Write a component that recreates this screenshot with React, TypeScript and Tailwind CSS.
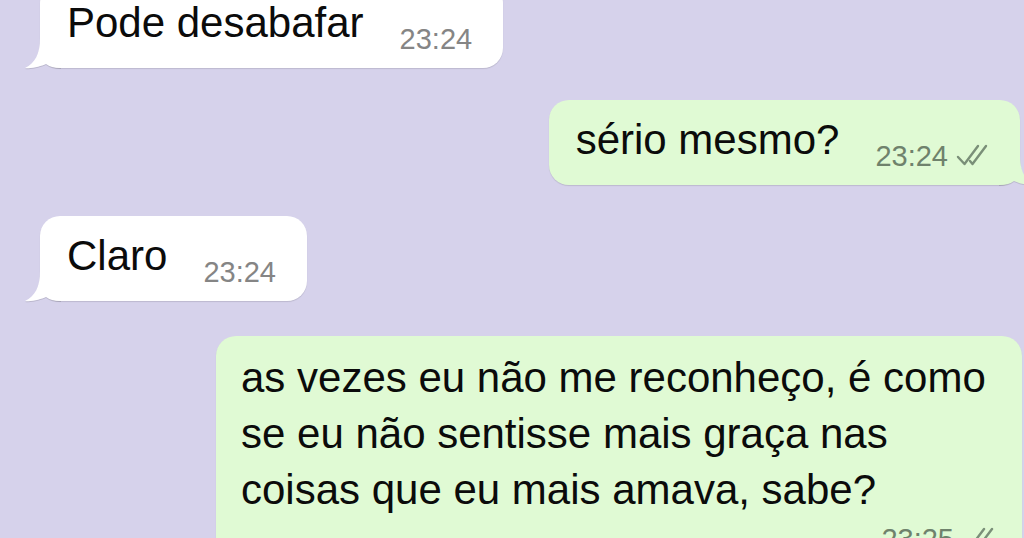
const font = { fontFamily: '"Liberation Sans", Arial, sans-serif' };

function Checks() {
  return (
    <svg width="34" height="24" viewBox="0 0 34 24" className="ml-[8px] mb-[1px]" fill="none">
      <path d="M2 14 L8.5 21 L22 3" stroke="#7a8f78" strokeWidth="2.4" strokeLinecap="round" strokeLinejoin="round" />
      <path d="M14 18 L16.5 21 L30 3" stroke="#7a8f78" strokeWidth="2.4" strokeLinecap="round" strokeLinejoin="round" />
    </svg>
  );
}

function TailLeft() {
  return (
    <svg
      width="36"
      height="31"
      viewBox="0 0 36 31"
      className="absolute left-[-15px] bottom-[-1px] drop-shadow-[0_1px_0.5px_rgba(0,0,0,0.12)]"
    >
      <path d="M15 0 C15 16 10 25 0 30 C8 31 16 28 21 26 C25 29 30 30 36 30 L36 0 Z" fill="#ffffff" />
    </svg>
  );
}

function TailRight() {
  return (
    <svg
      width="36"
      height="31"
      viewBox="0 0 36 31"
      className="absolute right-[-15px] bottom-[-1px] drop-shadow-[0_1px_0.5px_rgba(0,0,0,0.12)]"
    >
      <path d="M21 0 C21 16 26 25 36 30 C28 31 20 28 15 26 C11 29 6 30 0 30 L0 0 Z" fill="#e0fad4" />
    </svg>
  );
}

function Incoming({ text, time, className }: { text: string; time: string; className?: string }) {
  return (
    <div
      className={
        "relative self-start ml-[40px] flex items-end bg-white rounded-[20px] pl-[27px] pr-[31px] pt-[12px] pb-[17px] shadow-[0_1px_1px_rgba(0,0,0,0.12)] " +
        (className ?? "")
      }
    >
      <TailLeft />
      <span className="relative text-[42px] leading-[56px] text-[#0b0b0b]">{text}</span>
      <span className="relative ml-[36px] text-[29px] leading-[24px] text-[#858585]">{time}</span>
    </div>
  );
}

export default function App() {
  return (
    <div style={font} className="w-[1024px] h-[538px] overflow-hidden bg-[#d6d2eb] flex flex-col">
      <Incoming text="Pode desabafar" time="23:24" className="mt-[-17px]" />

      <div className="relative self-end mr-[4px] mt-[32px] flex items-end bg-[#e0fad4] rounded-[20px] pl-[27px] pr-[30px] pt-[12px] pb-[17px] shadow-[0_1px_1px_rgba(0,0,0,0.12)]">
        <TailRight />
        <span className="relative text-[42px] leading-[56px] text-[#0b0b0b]">sério mesmo?</span>
        <span className="relative ml-[36px] text-[29px] leading-[24px] text-[#6f826c]">23:24</span>
        <Checks />
      </div>

      <Incoming text="Claro" time="23:24" className="mt-[31px]" />

      <div className="self-end mr-[2px] mt-[35px] w-[806px] shrink-0 flex flex-col bg-[#e0fad4] rounded-t-[20px] pl-[25px] pr-[26px] pt-[14px] pb-[20px] shadow-[0_1px_1px_rgba(0,0,0,0.12)]">
        <p className="text-[42px] leading-[56px] text-[#0b0b0b]">
          as vezes eu não me reconheço, é como se eu não sentisse mais graça nas coisas que eu mais amava, sabe?
        </p>
        <div className="flex items-end justify-end mt-[8px]">
          <span className="text-[29px] leading-[24px] text-[#6f826c]">23:25</span>
          <Checks />
        </div>
      </div>
    </div>
  );
}
